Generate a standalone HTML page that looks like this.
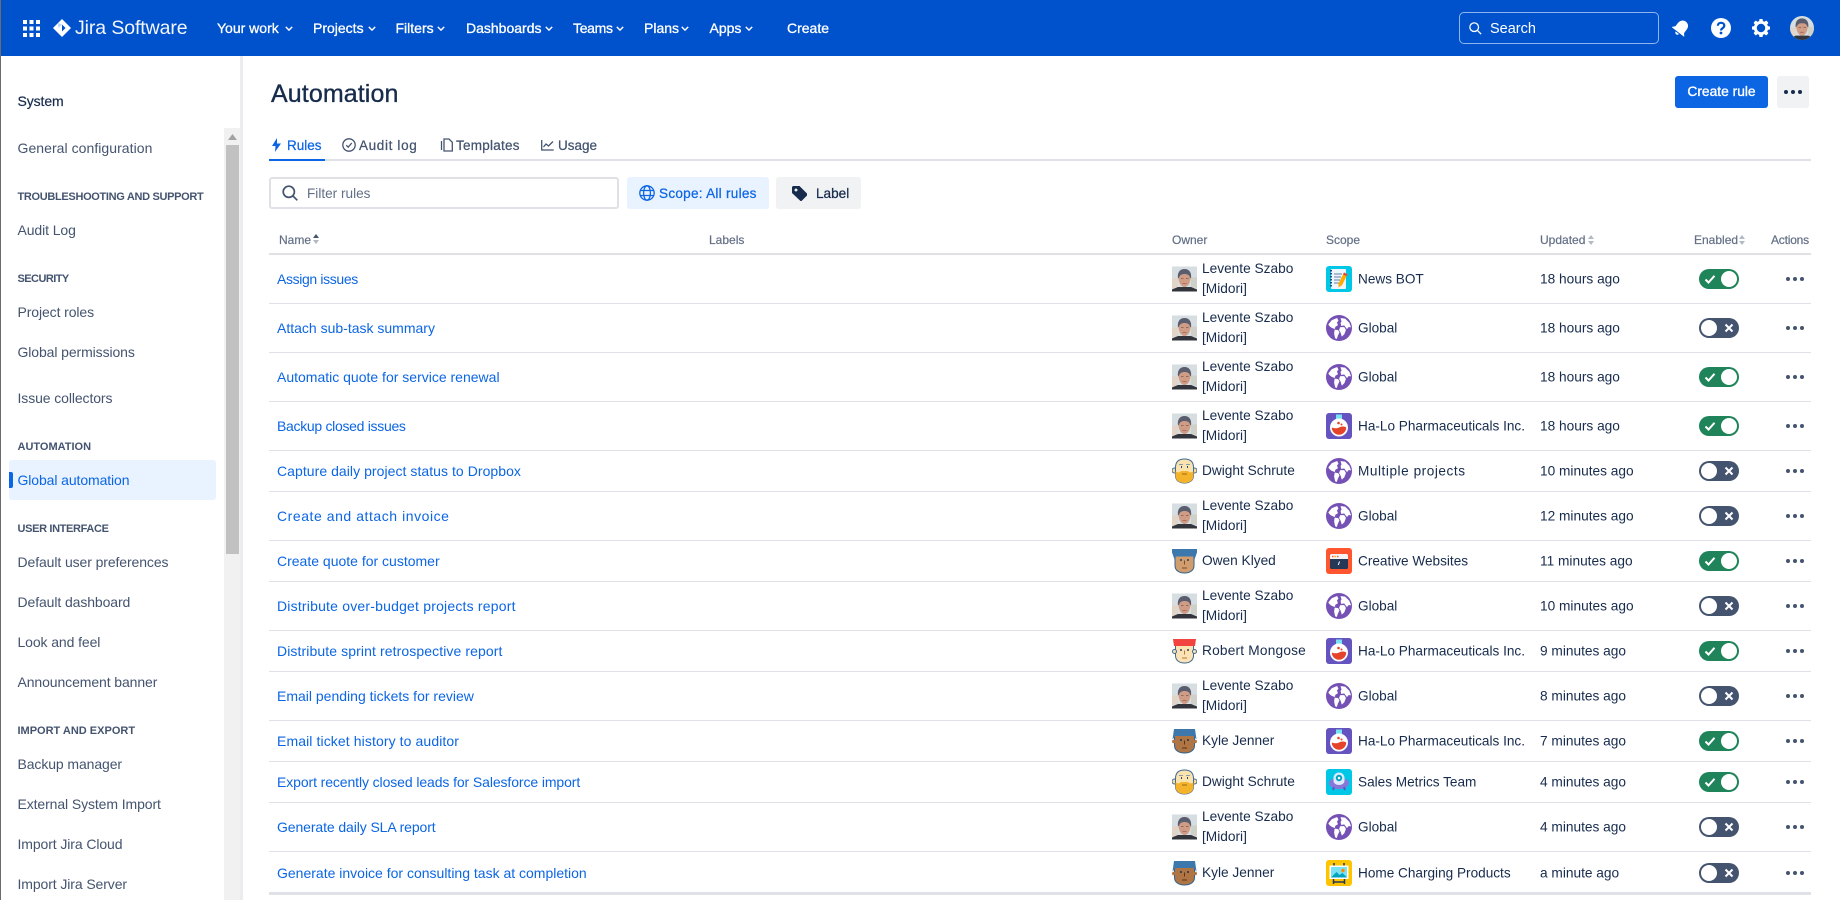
<!DOCTYPE html>
<html lang="en"><head><meta charset="utf-8"><title>Automation</title>
<style>
*{box-sizing:border-box}
html,body{margin:0;padding:0;width:1840px;height:900px;overflow:hidden;background:#fff;font-family:"Liberation Sans",sans-serif;color:#172b4d;font-size:14px}
.abs,.nav span,.side div{position:absolute;white-space:nowrap}
.edge{position:absolute;left:0;top:0;width:1px;height:900px;background:#6b6b6b;z-index:9}
.nav{position:absolute;left:0;top:0;width:1840px;height:56px;background:#0052cc;color:#fff}
.nav span{top:19px;line-height:18px;font-size:14px;-webkit-text-stroke:.3px #fff}
.nav svg{position:absolute}
.side div{left:17.5px;line-height:20px;color:#44546f;font-size:14px;letter-spacing:-.1px}
.side div.h{font-size:11px;font-weight:bold;letter-spacing:0;margin-top:1px}
.tab{position:absolute;top:137px;line-height:18px;color:#44546f;-webkit-text-stroke:.25px #44546f;font-size:13.5px}
.th{position:absolute;top:232px;line-height:16px;font-size:12px;color:#626f86;-webkit-text-stroke:.2px #626f86}
.r{position:absolute;left:269px;width:1542px;border-bottom:1px solid #dfe1e6}
.r>*{position:absolute;top:50%;transform:translateY(-50%);white-space:nowrap}
.n{left:8px;color:#0c66e4;font-size:14px}
.a{left:903px;width:25px;height:25px}
.o{left:933px;line-height:20px;font-size:13.7px}
.i{left:1057px;width:26px;height:26px}
.s{left:1089px;font-size:13.6px}
.u{left:1271px;font-size:13.7px}
.t{left:1430px;width:40px;height:20px;border-radius:10px;background:#1f845a}
.t:before{content:"";position:absolute;top:2px;left:22px;width:16px;height:16px;border-radius:50%;background:#fff}
.t svg{position:absolute;left:5px;top:4px;width:12px;height:12px}
.t.f{background:#44546f}
.t.f:before{left:2px}
.t.f svg{left:24px;top:4px}
.d{left:1516px;width:20px;height:6px}
.d:before{content:"";position:absolute;left:1px;top:1px;width:4px;height:4px;border-radius:50%;background:#44546f;box-shadow:7px 0 #44546f,14px 0 #44546f}
</style></head><body>
<svg width="0" height="0" style="position:absolute">
<defs>
<symbol id="p" viewBox="0 0 25 25"><rect width="25" height="25" fill="#d6dee2"/><rect y="12" width="6" height="10" fill="#e2d4c6"/><rect x="19" y="11" width="6" height="10" fill="#cfd0c8"/><path d="M0 25v-2l6-2.500h13l6 2.500v2z" fill="#33353d"/><path d="M6.500 11c0-5 2.500-7 6-7s6 2 6 7c0 5.500-2.800 9.500-6 9.500s-6-4-6-9.500z" fill="#cf9c85"/><path d="M6 12c-1-6 2-9.500 6.500-9.500S20 6 19 12l-1-1c-.5-2.500-2.500-3.500-5.500-3.500S8 8.500 7 11z" fill="#5a5d6e"/><path d="M9 12h2.500M14 12h2.500" stroke="#7d5a4e" stroke-width=".8"/><path d="M10.500 17h4" stroke="#a8635a" stroke-width=".8"/></symbol>
<symbol id="dw" viewBox="0 0 25 25"><circle cx="2.500" cy="12" r="2.500" fill="#f7dca0" stroke="#3e6a94"/><circle cx="22.500" cy="12" r="2.500" fill="#f7dca0" stroke="#3e6a94"/><path d="M3.500 9C3.500 3 7 .5 12.500.5S21.500 3 21.500 9v8c0 5-4 7.500-9 7.500s-9-2.500-9-7.500z" fill="#fbe3b0" stroke="#3e6a94"/><path d="M3.500 13l3 1 3-1.500h6l3 1.500 3-1v4c0 5-4 7.500-9 7.500s-9-2.500-9-7.500z" fill="#f5b32b"/><path d="M9 8.500h1M15 8.500h1" stroke="#1f4a70" stroke-width="2"/><path d="M7 6h4M14 6h4" stroke="#8a9aa8"/><path d="M10 15.500h5" stroke="#9c6d18"/></symbol>
<symbol id="ow" viewBox="0 0 25 25"><path d="M3 7h19v10c0 5-4.200 7.500-9.500 7.500S3 22 3 17z" fill="#d19c6e" stroke="#2c6391"/><path d="M0 .5h25v3.500l-2.500 7-1.500-3H4l-1.500 3L0 4z" fill="#3d78ad"/><path d="M8 11.500h2M15 11.500h2" stroke="#2d3f50" stroke-width="1.500"/><path d="M12.500 12v4M10 19.500h5" stroke="#7a4c2a"/></symbol>
<symbol id="ro" viewBox="0 0 25 25"><path d="M3.500 7h18v10c0 5-4 7.500-9 7.500s-9-2.500-9-7.500z" fill="#fce3b5" stroke="#3e6a94"/><circle cx="2.500" cy="13" r="2" fill="#fce3b5" stroke="#3e6a94"/><circle cx="22.500" cy="13" r="2" fill="#fce3b5" stroke="#3e6a94"/><path d="M1 .5h23l-1 7H2z" fill="#f1433f"/><path d="M8 11.500h2M15 11.500h2" stroke="#2d3f50" stroke-width="1.500"/><path d="M12.500 12v4M10 19.500h5" stroke="#b4793e"/></symbol>
<symbol id="ky" viewBox="0 0 25 25"><path d="M2.500 6h20v11c0 5-4.500 7.500-10 7.500S2.500 22 2.500 17z" fill="#b07544" stroke="#2c6391"/><circle cx="1.800" cy="13" r="1.800" fill="#b07544"/><circle cx="23.200" cy="13" r="1.800" fill="#b07544"/><path d="M2 .5h21l1.500 10.500-3-3.500h-18L.5 11z" fill="#3d78ad"/><path d="M8 11.500h2M15 11.500h2" stroke="#1f3346" stroke-width="1.500"/><path d="M12.500 12v4M10 19.500h5" stroke="#5c3415"/></symbol>
<symbol id="gl" viewBox="0 0 26 26"><circle cx="13" cy="13" r="13" fill="#7551b5"/><g fill="#fff" stroke="#fff" stroke-width=".8" stroke-linejoin="round"><path d="M2.800 9.500L6 5.500 11 3.500 12 5.500 10.500 7.500 11.500 10 9 11.500 8.500 13.500 6 12.500 4 11z"/><path d="M9 15L12 15.500 13 17.500 11.500 20.500 10.500 23.500 9.500 23 8.500 18.500z"/><path d="M15 3.500L19 4 23 8 24.500 12 22.500 11.500 21 13.500 19.500 11.500 18.500 10 15.500 10.500 15 8 16 6.500z"/><path d="M14.500 12.500L18 12.500 19.500 15 18 19 16 21 15 17.500 13.500 15z"/></g></symbol>
<symbol id="ha" viewBox="0 0 26 26"><rect width="26" height="26" rx="3" fill="#6554c0"/><rect x="10" y="1.500" width="6" height="4.500" fill="#79e2f2"/><circle cx="13" cy="14.500" r="9" fill="#fff"/><path d="M5.800 14.500a7.200 7.200 0 0 0 14.400 0c-2.500-1.500-5-1-7.200 0s-4.700 1-7.200 0z" fill="#e5432a"/><circle cx="12.500" cy="10" r="1.300" fill="#e5432a"/><circle cx="15.500" cy="11.500" r="1" fill="#e5432a"/></symbol>
<symbol id="nb" viewBox="0 0 26 26"><rect width="26" height="26" rx="3" fill="#00c7e6"/><rect x="5" y="3" width="15" height="20" rx="1" fill="#eef5ff"/><path d="M8 8h8M8 11h7M8 14h6M8 17h5" stroke="#5e7fa8"/><path d="M5 4v18" stroke="#2c4d73" stroke-dasharray="1.500 1.500" stroke-width="2"/><path d="M18 6.500l3.500 1.700-5.500 11-3.500 2.300 0-4z" fill="#ffab00"/><path d="M18 6.500l3.500 1.700-1 2-3.500-1.700z" fill="#e5493a"/></symbol>
<symbol id="cw" viewBox="0 0 26 26"><rect width="26" height="26" rx="3" fill="#ff5630"/><rect x="4" y="6" width="18" height="15" rx="1.500" fill="#253858"/><path d="M4 7.500A1.500 1.500 0 0 1 5.500 6h15A1.500 1.500 0 0 1 22 7.500V11H4z" fill="#f4f5f7"/><path d="M6 8.500h1.500" stroke="#ff5630" stroke-width="1.500"/><path d="M8.500 8.500h1.500" stroke="#ffab00" stroke-width="1.500"/><path d="M11 8.500h1.500" stroke="#ff5630" stroke-width="1.500"/><path d="M13.500 13.500l-1.200 3.500" stroke="#fff"/></symbol>
<symbol id="sm" viewBox="0 0 26 26"><rect width="26" height="26" rx="3" fill="#00c7e6"/><path d="M3 14c0-3 3-4 5-4h10c2 0 5 1 5 4s-4 6-10 6-10-3-10-6z" fill="#8777d9"/><path d="M7 21l1-3M19 21l-1-3" stroke="#6554c0" stroke-width="2"/><path d="M7.500 12V9a5.500 5.500 0 0 1 11 0v3a5.500 4 0 0 1-11 0z" fill="#deebff"/><circle cx="13" cy="9" r="3.200" fill="#00a3bf"/><circle cx="13" cy="9" r="1.300" fill="#fff"/></symbol>
<symbol id="hc" viewBox="0 0 26 26"><rect width="26" height="26" rx="3" fill="#ffc400"/><rect x="3.500" y="5.500" width="19" height="13.500" fill="#fff"/><rect x="5" y="7" width="16" height="10.500" fill="#79e2f2"/><path d="M5 17.500l5.500-5.500 3 3 3-2 4.500 4.500z" fill="#00a3bf"/><circle cx="17" cy="10.500" r="1.700" fill="#ff8b00"/><path d="M8 5.500V3M18 5.500V3M7.500 19v5M18.500 19v5M7.500 22h11" stroke="#253858" stroke-width="1.500" fill="none"/></symbol>
<symbol id="ck" viewBox="0 0 12 12"><path d="M1.500 6.500L4.500 9.500 10.500 2.800" stroke="#fff" stroke-width="2" fill="none"/></symbol>
<symbol id="xx" viewBox="0 0 12 12"><path d="M2.500 2.500l7 7M9.500 2.500l-7 7" stroke="#fff" stroke-width="2" fill="none"/></symbol>
<symbol id="sort" viewBox="0 0 6 10"><path d="M3 0l3 4H0zM3 10l3-4H0z" fill="#b3b9c4"/></symbol>
<symbol id="chev" viewBox="0 0 10 6"><path d="M1 1l4 4 4-4" stroke="#fff" stroke-width="1.800" fill="none"/></symbol>
</defs></svg>

<div class="edge"></div>

<div class="nav">
<svg style="left:23px;top:20px" width="17" height="17" viewBox="0 0 17 17" fill="#fff"><rect width="4" height="4"/><rect x="6.500" width="4" height="4"/><rect x="13" width="4" height="4"/><rect y="6.500" width="4" height="4"/><rect x="6.500" y="6.500" width="4" height="4"/><rect x="13" y="6.500" width="4" height="4"/><rect y="13" width="4" height="4"/><rect x="6.500" y="13" width="4" height="4"/><rect x="13" y="13" width="4" height="4"/></svg>
<svg style="left:53px;top:19px" width="18" height="18" viewBox="0 0 18 18"><path d="M9 0l9 9-9 9-9-9z" fill="#fff"/><path d="M9 5.500L12.500 9 9 12.500z" fill="#0052cc"/><path d="M5 4l4 1.500L5.500 9z" fill="#b3d4ff"/></svg>
<span style="left:75px;top:15px;line-height:26px;font-size:19.500px;-webkit-text-stroke:0;letter-spacing:-.1px;color:#f4f6fb">Jira Software</span>
<span style="left:217px">Your work</span><svg style="left:285px;top:26px" width="8" height="5"><use href="#chev"/></svg>
<span style="left:313px">Projects</span><svg style="left:368px;top:26px" width="8" height="5"><use href="#chev"/></svg>
<span style="left:395.500px">Filters</span><svg style="left:437px;top:26px" width="8" height="5"><use href="#chev"/></svg>
<span style="left:466px">Dashboards</span><svg style="left:545px;top:26px" width="8" height="5"><use href="#chev"/></svg>
<span style="left:573px;letter-spacing:-.3px">Teams</span><svg style="left:616px;top:26px" width="8" height="5"><use href="#chev"/></svg>
<span style="left:644px">Plans</span><svg style="left:681px;top:26px" width="8" height="5"><use href="#chev"/></svg>
<span style="left:709.500px">Apps</span><svg style="left:745px;top:26px" width="8" height="5"><use href="#chev"/></svg>
<span style="left:787px">Create</span>
<div style="position:absolute;left:1459px;top:12px;width:200px;height:32px;border:1px solid #8db5f0;border-radius:5px"></div>
<svg style="left:1469px;top:22px" width="13" height="13" viewBox="0 0 15 15" fill="none" stroke="#fff" stroke-width="1.500"><circle cx="6" cy="6" r="5"/><path d="M10 10l4 4"/></svg>
<span style="left:1490px;top:20px;font-size:14.500px;-webkit-text-stroke:0">Search</span>
<svg style="left:1672px;top:19px" width="18" height="18" viewBox="0 0 18 18" fill="#fff"><g transform="rotate(38 9 9)"><path d="M9 1c3.800 0 5.500 3 5.500 6v4l2.500 3H1l2.500-3V7C3.500 4 5.200 1 9 1z"/><path d="M7 15h4c0 2.600-4 2.600-4 0z"/></g></svg>
<svg style="left:1711px;top:18px" width="20" height="20" viewBox="0 0 20 20"><circle cx="10" cy="10" r="10" fill="#fff"/><path d="M6.800 7.800C6.800 5.800 8.300 4.800 10 4.800s3.300 1 3.300 2.800c0 2.500-3.300 2.500-3.300 4.900" fill="none" stroke="#0052cc" stroke-width="2.200"/><circle cx="10" cy="15" r="1.400" fill="#0052cc"/></svg>
<svg style="left:1752px;top:19px" width="18" height="18" viewBox="0 0 20 20"><circle cx="10" cy="10" r="6.300" fill="none" stroke="#fff" stroke-width="3.200"/><g fill="#fff"><rect x="8" y="0" width="4" height="4" rx="1"/><rect x="8" y="16" width="4" height="4" rx="1"/><rect x="0" y="8" width="4" height="4" rx="1"/><rect x="16" y="8" width="4" height="4" rx="1"/><rect x="8" y="0" width="4" height="4" rx="1" transform="rotate(45 10 10)"/><rect x="8" y="16" width="4" height="4" rx="1" transform="rotate(45 10 10)"/><rect x="0" y="8" width="4" height="4" rx="1" transform="rotate(45 10 10)"/><rect x="16" y="8" width="4" height="4" rx="1" transform="rotate(45 10 10)"/></g></svg>
<svg style="left:1790px;top:16px;border-radius:50%" width="24" height="24"><use href="#p"/></svg>
</div>

<div class="side">
<div style="top:91px;color:#172b4d;-webkit-text-stroke:.2px #172b4d">System</div>
<div style="top:138px;letter-spacing:.05px">General configuration</div>
<div class="h" style="top:186px;letter-spacing:-.32px">TROUBLESHOOTING AND SUPPORT</div>
<div style="top:220px">Audit Log</div>
<div class="h" style="top:268px;letter-spacing:-.56px">SECURITY</div>
<div style="top:302px">Project roles</div>
<div style="top:342px">Global permissions</div>
<div style="top:388px">Issue collectors</div>
<div class="h" style="top:436px">AUTOMATION</div>
<i class="abs" style="left:9px;top:460px;width:207px;height:40px;background:#e9f2ff;border-radius:3px"></i>
<i class="abs" style="left:9px;top:472px;width:4px;height:16px;background:#0c66e4;border-radius:0 2px 2px 0"></i>
<div style="top:470px;color:#0c66e4">Global automation</div>
<div class="h" style="top:518px;letter-spacing:-.35px">USER INTERFACE</div>
<div style="top:552px">Default user preferences</div>
<div style="top:592px">Default dashboard</div>
<div style="top:632px">Look and feel</div>
<div style="top:672px">Announcement banner</div>
<div class="h" style="top:720px">IMPORT AND EXPORT</div>
<div style="top:754px">Backup manager</div>
<div style="top:794px">External System Import</div>
<div style="top:834px">Import Jira Cloud</div>
<div style="top:874px">Import Jira Server</div>
</div>
<i class="abs" style="left:224px;top:128px;width:16px;height:772px;background:#f1f1f1"></i>
<i class="abs" style="left:226px;top:145px;width:13px;height:409px;background:#c1c1c1"></i>
<svg class="abs" style="left:228px;top:134px" width="9" height="6"><path d="M4.500 0l4.500 6H0z" fill="#a3a3a3"/></svg>
<i class="abs" style="left:240px;top:56px;width:3px;height:844px;background:#ebecf0"></i>

<div class="abs" style="left:271px;top:78px;font-size:25px;line-height:32px;-webkit-text-stroke:.35px #172b4d;letter-spacing:.1px">Automation</div>
<div class="abs" style="left:1675px;top:76px;width:93px;height:32px;background:#0c66e4;border-radius:3px;color:#fff;text-align:center;line-height:32px;font-size:13.800px;-webkit-text-stroke:.35px #fff">Create rule</div>
<div class="abs" style="left:1777px;top:76px;width:32px;height:32px;background:#f1f2f4;border-radius:3px"><i class="abs" style="left:7px;top:14px;width:4px;height:4px;border-radius:50%;background:#172b4d;box-shadow:7px 0 #172b4d,14px 0 #172b4d"></i></div>

<svg class="abs" style="left:272px;top:138px" width="9" height="14" viewBox="0 0 9 14"><path d="M5 0L0 8h3.500L3 14l6-8.500H5z" fill="#0c66e4"/></svg>
<div class="tab" style="left:287px;color:#0c66e4;-webkit-text-stroke:.25px #0c66e4">Rules</div>
<svg class="abs" style="left:342px;top:138px" width="14" height="14" viewBox="0 0 14 14" fill="none" stroke="#44546f" stroke-width="1.300"><circle cx="7" cy="7" r="6.200"/><path d="M4.200 7.200L6.200 9.200 9.800 5"/></svg>
<div class="tab" style="left:359px;letter-spacing:.65px">Audit log</div>
<svg class="abs" style="left:440px;top:138px" width="13" height="14" viewBox="0 0 13 14" fill="none" stroke="#44546f" stroke-width="1.300"><path d="M4 1h5l3.300 3.300V13H4z"/><path d="M1.500 3v9"/></svg>
<div class="tab" style="left:456px;letter-spacing:.25px">Templates</div>
<svg class="abs" style="left:541px;top:139px" width="13" height="12" viewBox="0 0 13 12" fill="none" stroke="#44546f" stroke-width="1.300"><path d="M.7 1v10h12"/><path d="M2.500 8L5 5l2.500 2L12 2.500"/></svg>
<div class="tab" style="left:558px">Usage</div>
<i class="abs" style="left:269px;top:159px;width:1542px;height:2px;background:#dfe1e6"></i>
<i class="abs" style="left:269px;top:159px;width:56px;height:2px;background:#0c66e4"></i>

<div class="abs" style="left:269px;top:177px;width:350px;height:32px;border:2px solid #dfe1e6;border-radius:3px"></div>
<svg class="abs" style="left:282px;top:185px" width="16" height="16" viewBox="0 0 16 16" fill="none" stroke="#44546f" stroke-width="1.700"><circle cx="6.800" cy="6.800" r="5.600"/><path d="M11 11l4.300 4.300"/></svg>
<div class="abs" style="left:307px;top:185px;line-height:18px;color:#626f86;font-size:13.600px">Filter rules</div>
<div class="abs" style="left:627px;top:177px;width:142px;height:32px;background:#e9f2ff;border-radius:3px"></div>
<svg class="abs" style="left:639px;top:185px" width="16" height="16" viewBox="0 0 16 16" fill="none" stroke="#0c66e4" stroke-width="1.300"><circle cx="8" cy="8" r="7.200"/><ellipse cx="8" cy="8" rx="3.400" ry="7.200"/><path d="M1 5.500h14M1 10.500h14"/></svg>
<div class="abs" style="left:659px;top:185px;line-height:18px;color:#0c66e4;font-size:13.600px;letter-spacing:.25px;-webkit-text-stroke:.25px #0c66e4">Scope: All rules</div>
<div class="abs" style="left:776px;top:177px;width:85px;height:32px;background:#f1f2f4;border-radius:3px"></div>
<svg class="abs" style="left:792px;top:186px" width="15" height="15" viewBox="0 0 15 15"><path d="M1 0h6.500L15 7.500a1.500 1.500 0 0 1 0 2L9.500 15h-1L0 7V1zM4 2.500a1.500 1.500 0 1 0 .01 0z" fill="#172b4d" fill-rule="evenodd"/></svg>
<div class="abs" style="left:816px;top:185px;line-height:18px;font-size:13.600px;-webkit-text-stroke:.25px #172b4d">Label</div>

<div class="th" style="left:279px">Name</div><svg class="abs" style="left:312.500px;top:234px" width="6" height="10"><path d="M3 0l3 4H0z" fill="#44546f"/><path d="M3 10l3-4H0z" fill="#b3b9c4"/></svg>
<div class="th" style="left:709px">Labels</div>
<div class="th" style="left:1172px">Owner</div>
<div class="th" style="left:1326px">Scope</div>
<div class="th" style="left:1540px">Updated</div><svg class="abs" style="left:1588px;top:235px" width="6" height="10"><use href="#sort"/></svg>
<div class="th" style="left:1694px">Enabled</div><svg class="abs" style="left:1739px;top:235px" width="6" height="10"><use href="#sort"/></svg>
<div class="th" style="left:1771px;letter-spacing:-.2px">Actions</div>
<i class="abs" style="left:269px;top:253px;width:1542px;height:2px;background:#dfe1e6"></i>

<div class="r" style="top:255px;height:49px"><span class="n" style="letter-spacing:-.36px">Assign issues</span><svg class="a"><use href="#p"/></svg><span class="o">Levente Szabo<br>[Midori]</span><svg class="i"><use href="#nb"/></svg><span class="s">News BOT</span><span class="u">18 hours ago</span><span class="t"><svg><use href="#ck"/></svg></span><span class="d"></span></div>
<div class="r" style="top:304px;height:49px"><span class="n">Attach sub-task summary</span><svg class="a"><use href="#p"/></svg><span class="o">Levente Szabo<br>[Midori]</span><svg class="i"><use href="#gl"/></svg><span class="s">Global</span><span class="u">18 hours ago</span><span class="t f"><svg><use href="#xx"/></svg></span><span class="d"></span></div>
<div class="r" style="top:353px;height:49px"><span class="n">Automatic quote for service renewal</span><svg class="a"><use href="#p"/></svg><span class="o">Levente Szabo<br>[Midori]</span><svg class="i"><use href="#gl"/></svg><span class="s">Global</span><span class="u">18 hours ago</span><span class="t"><svg><use href="#ck"/></svg></span><span class="d"></span></div>
<div class="r" style="top:402px;height:49px"><span class="n" style="letter-spacing:-.3px">Backup closed issues</span><svg class="a"><use href="#p"/></svg><span class="o">Levente Szabo<br>[Midori]</span><svg class="i"><use href="#ha"/></svg><span class="s">Ha-Lo Pharmaceuticals Inc.</span><span class="u">18 hours ago</span><span class="t"><svg><use href="#ck"/></svg></span><span class="d"></span></div>
<div class="r" style="top:451px;height:41px"><span class="n" style="letter-spacing:.05px">Capture daily project status to Dropbox</span><svg class="a"><use href="#dw"/></svg><span class="o">Dwight Schrute</span><svg class="i"><use href="#gl"/></svg><span class="s" style="letter-spacing:.55px">Multiple projects</span><span class="u">10 minutes ago</span><span class="t f"><svg><use href="#xx"/></svg></span><span class="d"></span></div>
<div class="r" style="top:492px;height:49px"><span class="n" style="letter-spacing:.55px">Create and attach invoice</span><svg class="a"><use href="#p"/></svg><span class="o">Levente Szabo<br>[Midori]</span><svg class="i"><use href="#gl"/></svg><span class="s">Global</span><span class="u">12 minutes ago</span><span class="t f"><svg><use href="#xx"/></svg></span><span class="d"></span></div>
<div class="r" style="top:541px;height:41px"><span class="n">Create quote for customer</span><svg class="a"><use href="#ow"/></svg><span class="o">Owen Klyed</span><svg class="i"><use href="#cw"/></svg><span class="s">Creative Websites</span><span class="u">11 minutes ago</span><span class="t"><svg><use href="#ck"/></svg></span><span class="d"></span></div>
<div class="r" style="top:582px;height:49px"><span class="n" style="letter-spacing:.2px">Distribute over-budget projects report</span><svg class="a"><use href="#p"/></svg><span class="o">Levente Szabo<br>[Midori]</span><svg class="i"><use href="#gl"/></svg><span class="s">Global</span><span class="u">10 minutes ago</span><span class="t f"><svg><use href="#xx"/></svg></span><span class="d"></span></div>
<div class="r" style="top:631px;height:41px"><span class="n" style="letter-spacing:.1px">Distribute sprint retrospective report</span><svg class="a"><use href="#ro"/></svg><span class="o" style="letter-spacing:.2px">Robert Mongose</span><svg class="i"><use href="#ha"/></svg><span class="s">Ha-Lo Pharmaceuticals Inc.</span><span class="u">9 minutes ago</span><span class="t"><svg><use href="#ck"/></svg></span><span class="d"></span></div>
<div class="r" style="top:672px;height:49px"><span class="n">Email pending tickets for review</span><svg class="a"><use href="#p"/></svg><span class="o">Levente Szabo<br>[Midori]</span><svg class="i"><use href="#gl"/></svg><span class="s">Global</span><span class="u">8 minutes ago</span><span class="t f"><svg><use href="#xx"/></svg></span><span class="d"></span></div>
<div class="r" style="top:721px;height:41px"><span class="n" style="letter-spacing:.1px">Email ticket history to auditor</span><svg class="a"><use href="#ky"/></svg><span class="o">Kyle Jenner</span><svg class="i"><use href="#ha"/></svg><span class="s">Ha-Lo Pharmaceuticals Inc.</span><span class="u">7 minutes ago</span><span class="t"><svg><use href="#ck"/></svg></span><span class="d"></span></div>
<div class="r" style="top:762px;height:41px"><span class="n" style="letter-spacing:-.1px">Export recently closed leads for Salesforce import</span><svg class="a"><use href="#dw"/></svg><span class="o">Dwight Schrute</span><svg class="i"><use href="#sm"/></svg><span class="s">Sales Metrics Team</span><span class="u">4 minutes ago</span><span class="t"><svg><use href="#ck"/></svg></span><span class="d"></span></div>
<div class="r" style="top:803px;height:49px"><span class="n" style="letter-spacing:-.1px">Generate daily SLA report</span><svg class="a"><use href="#p"/></svg><span class="o">Levente Szabo<br>[Midori]</span><svg class="i"><use href="#gl"/></svg><span class="s">Global</span><span class="u">4 minutes ago</span><span class="t f"><svg><use href="#xx"/></svg></span><span class="d"></span></div>
<div class="r" style="top:852px;height:41px;border-bottom:0"><span class="n">Generate invoice for consulting task at completion</span><svg class="a"><use href="#ky"/></svg><span class="o">Kyle Jenner</span><svg class="i"><use href="#hc"/></svg><span class="s">Home Charging Products</span><span class="u">a minute ago</span><span class="t f"><svg><use href="#xx"/></svg></span><span class="d"></span></div>
<i class="abs" style="left:269px;top:892px;width:1542px;height:3px;background:#dfe1e6"></i>
</body></html>
